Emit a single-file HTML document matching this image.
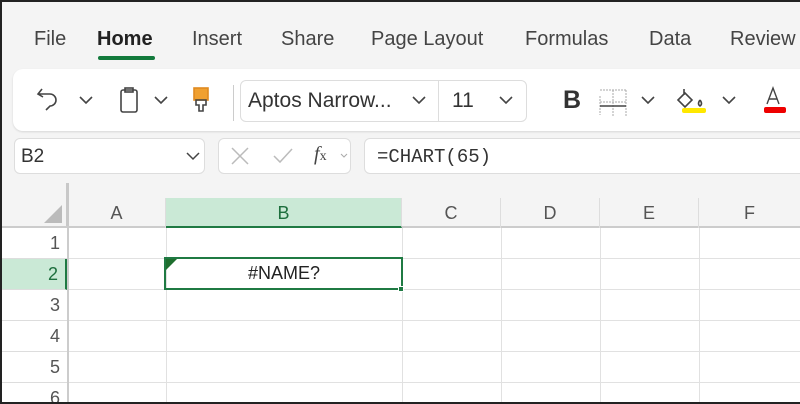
<!DOCTYPE html>
<html style="overflow:hidden;width:800px;height:404px"><head><style>
*{margin:0;padding:0;box-sizing:border-box}
body{width:800px;height:404px;background:#f4f4f4;font-family:"Liberation Sans",sans-serif;position:relative;overflow:hidden;color:#333}
.frame{position:absolute;left:0;top:0;width:800px;height:404px;border:2px solid #222;border-right:none;pointer-events:none;z-index:10}
.tab{position:absolute;top:28px;font-size:20px;color:#444}
.box{position:absolute;background:#fff;border:1px solid #ddd;border-radius:6px}
.abs{position:absolute}
.ch{position:absolute;top:198px;height:30px;font-size:18px;color:#555;text-align:center;line-height:30px;border-right:1px solid #ddd}
.rh{position:absolute;left:2px;width:65px;font-size:18px;color:#555;text-align:right;padding-right:7px;border-bottom:1px solid #ddd}
</style></head><body>
<div class="tab" style="left:34px">File</div>
<div class="tab" style="left:97px;font-weight:bold;color:#222">Home</div>
<div class="abs" style="left:98px;top:56px;width:57px;height:4px;background:#137a3c;border-radius:2px"></div>
<div class="tab" style="left:192px">Insert</div>
<div class="tab" style="left:281px">Share</div>
<div class="tab" style="left:371px">Page Layout</div>
<div class="tab" style="left:525px">Formulas</div>
<div class="tab" style="left:649px">Data</div>
<div class="tab" style="left:730px">Review</div>

<div class="abs" style="left:13px;top:69px;width:800px;height:62px;background:#fff;border-radius:10px;box-shadow:0 1px 2px rgba(0,0,0,.12)"></div>
<svg class="abs" style="left:30px;top:80px" width="200" height="40" fill="none" stroke="#444" stroke-width="1.6">
<path d="M12 9 L8 14 L13 17 M8 14 H20 a6 6 0 0 1 0 12 L16 30"/>
<path d="M50 17 l6 6 l6-6"/>
<rect x="91" y="10" width="16" height="22" rx="2"/><rect x="95" y="8" width="8" height="4"/>
<path d="M125 17 l6 6 l6-6"/>
<rect x="164" y="8" width="14" height="12" fill="#f0a030" stroke="#e08a20"/>
<path d="M166 20 h10 v5 h-3 v6 h-4 v-6 h-3z"/>
</svg>
<div class="abs" style="left:233px;top:85px;width:1px;height:36px;background:#ccc"></div>
<div class="box" style="left:240px;top:80px;width:287px;height:42px"></div>
<div class="abs" style="left:438px;top:80px;width:1px;height:42px;background:#ddd"></div>
<div class="abs" style="left:248px;top:89px;font-size:21px;color:#333">Aptos Narrow...</div>
<div class="abs" style="left:452px;top:89px;font-size:21px;color:#333">11</div>
<svg class="abs" style="left:400px;top:80px" width="400" height="40" fill="none" stroke="#444" stroke-width="1.6">
<path d="M13 17 l6 6 l6-6 M100 17 l6 6 l6-6"/>
<path d="M200 16 v19 M200 10 h26 M200 22 h26 M213 10 v26 M226 10 v26" stroke="#aaa" stroke-dasharray="2 1" stroke-width="1"/>
<path d="M200 26 h26" stroke="#444" stroke-width="1.5"/>
<path d="M242 17 l6 6 l6-6 M323 17 l6 6 l6-6"/>
<path d="M284 9 v6 M278 20 l7-7 l7 7 l-7 7z M300 20 q-3 4 0 6 q3-2 0-6"/>
<rect x="282" y="28" width="24" height="5" rx="2" fill="#ffe800" stroke="none"/>
<path d="M367 24 l6-16 l6 16 M369 19 h8" stroke-width="1.4"/>
<rect x="364" y="27" width="22" height="6" rx="2" fill="#e00" stroke="none"/>
</svg>
<div class="abs" style="left:563px;top:86px;font-size:25px;font-weight:bold;color:#333">B</div>

<div class="box" style="left:14px;top:138px;width:191px;height:36px"></div>
<div class="abs" style="left:21px;top:146px;font-size:19px;color:#333">B2</div>
<div class="box" style="left:218px;top:138px;width:133px;height:36px"></div>
<svg class="abs" style="left:180px;top:138px" width="180" height="36" fill="none" stroke-width="1.5">
<path d="M7 15 l6 6 l6-6" stroke="#444"/>
<path d="M52 10 l16 16 M68 10 l-16 16" stroke="#bbb"/>
<path d="M94 18 l6 6 l12-13" stroke="#bbb"/>
<path d="M161 16 l3 3 l3-3" stroke="#aaa" stroke-width="1"/>
</svg>
<div class="abs" style="left:314px;top:143px;font-size:20px;font-style:italic;font-family:'Liberation Serif',serif;color:#444">f<span style="font-size:14px;font-style:normal">x</span></div>
<div class="box" style="left:364px;top:138px;width:450px;height:36px"></div>
<div class="abs" style="left:377px;top:146px;font-size:19px;font-family:'Liberation Mono',monospace;color:#333">=CHART(65)</div>

<div class="abs" style="left:2px;top:228px;width:798px;height:176px;background:#fff;overflow:hidden"></div>
<div class="abs" style="left:66px;top:183px;width:3px;height:45px;background:#c8c8c8"></div>
<div class="abs" style="left:2px;top:226px;width:798px;height:2px;background:#ccc"></div>
<svg class="abs" style="left:42px;top:205px" width="20" height="20"><path d="M20 0 V18 H2z" fill="#bbb"/></svg>
<div class="ch" style="left:68px;width:98px">A</div>
<div class="ch" style="left:166px;width:236px;background:#cae9d6;color:#1d6f3d;border-bottom:2px solid #1f7a43">B</div>
<div class="ch" style="left:402px;width:99px">C</div>
<div class="ch" style="left:501px;width:99px">D</div>
<div class="ch" style="left:600px;width:99px">E</div>
<div class="ch" style="left:699px;width:101px;border-right:none">F</div>
<div class="abs" style="left:67px;top:228px;width:2px;height:176px;background:#ccc"></div>
<div class="rh" style="top:228px;height:31px;line-height:31px">1</div>
<div class="rh" style="top:259px;height:31px;line-height:31px;background:#cae9d6;color:#1d6f3d;border-right:2px solid #1f7a43">2</div>
<div class="rh" style="top:290px;height:31px;line-height:31px">3</div>
<div class="rh" style="top:321px;height:31px;line-height:31px">4</div>
<div class="rh" style="top:352px;height:31px;line-height:31px">5</div>
<div class="rh" style="top:383px;height:21px;line-height:31px;overflow:hidden">6</div>
<svg class="abs" style="left:69px;top:228px" width="731" height="176">
<g stroke="#e1e1e1" stroke-width="1">
<path d="M0 30.5 H731 M0 61.5 H731 M0 92.5 H731 M0 123.5 H731 M0 154.5 H731"/>
<path d="M97.5 0 V176 M333.5 0 V176 M432.5 0 V176 M531.5 0 V176 M630.5 0 V176"/>
</g></svg>
<div class="abs" style="left:164px;top:257px;width:239px;height:33px;border:2px solid #1f7a43"></div>
<div class="abs" style="left:398px;top:286px;width:6px;height:6px;background:#1f7a43;border:1px solid #fff"></div>
<svg class="abs" style="left:166px;top:259px" width="12" height="12"><path d="M0 0 H11 L0 11z" fill="#1e6e2e"/></svg>
<div class="abs" style="left:166px;top:263px;width:236px;text-align:center;font-size:18px;color:#222">#NAME?</div>
<div class="frame"></div>
</body></html>
